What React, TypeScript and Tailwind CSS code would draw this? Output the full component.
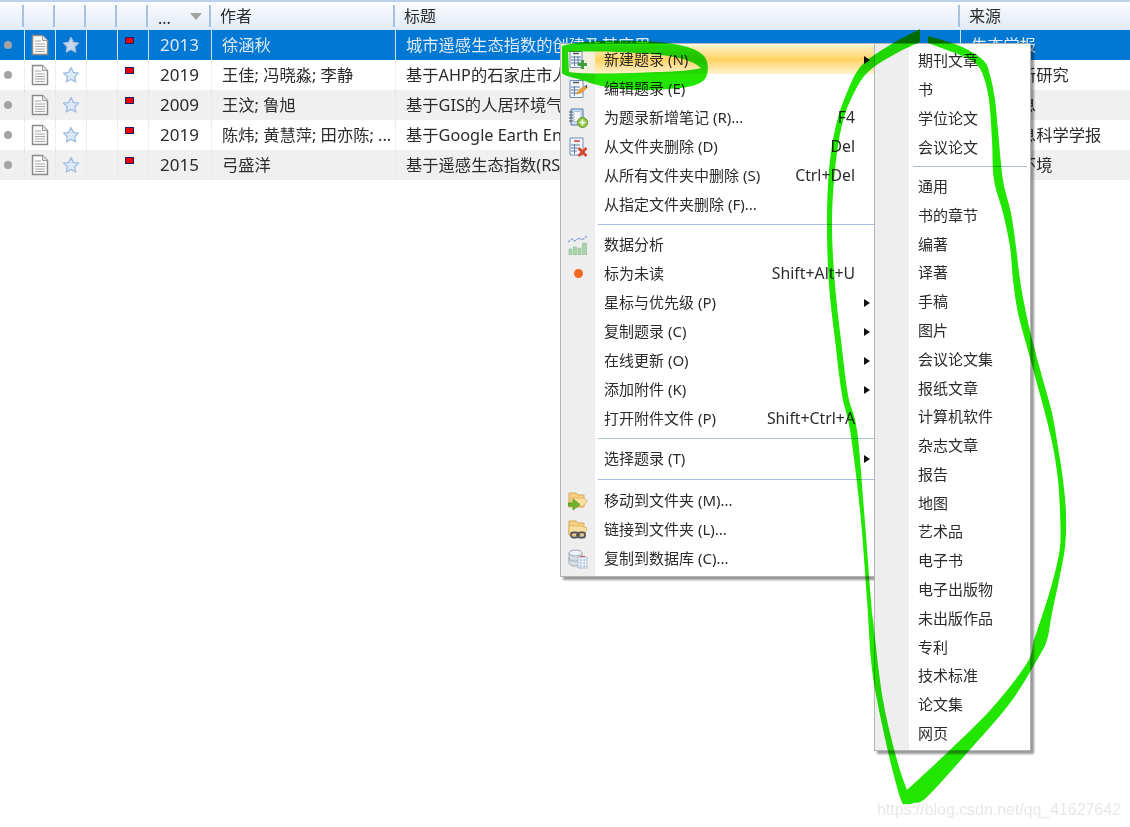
import React from "react";

const columns = "grid grid-cols-[25px_31px_31px_31px_31px_63px_184px_565px_169px]";

const rows = [
    { year: "2013", author: "徐涵秋", title: "城市遥感生态指数的创建及其应用", source: "生态学报" },
    { year: "2019", author: "王佳; 冯晓淼; 李静", title: "基于AHP的石家庄市人居环境适宜性评价", source: "科技创新研究" },
    { year: "2009", author: "王汶; 鲁旭", title: "基于GIS的人居环境气候适宜性评价", source: "科技信息" },
    { year: "2019", author: "陈炜; 黄慧萍; 田亦陈; ...", title: "基于Google Earth Engine平台的生态环境变化监测", source: "地球信息科学学报" },
    { year: "2015", author: "弓盛洋", title: "基于遥感生态指数(RSEI)的生态环境质量评价", source: "资源与环境" },
];

function DocIcon() {
    return (
        <svg width="20" height="22" viewBox="0 0 20 22">
            <path d="M2.500 1.500h10l5 5v14h-15z" fill="#fbfbfb" stroke="#8a8a8a" strokeWidth="1.500" />
            <path d="M12.500 1.500v5h5" fill="#e2e2e2" stroke="#9a9a9a" />
            <path d="M5 7h6M5 10h10M5 12.500h10M5 15h10M5 17.500h10" stroke="#a8a8a8" strokeWidth="1.200" />
        </svg>
    );
}

function StarIcon({ filled }: { filled?: boolean }) {
    return (
        <svg width="18" height="18" viewBox="0 0 18 18">
            <path
                d="M9 1.500l2.300 4.900 5.200.7-3.800 3.600 1 5.300L9 13.400 4.300 16l1-5.300L1.500 7.100l5.200-.7z"
                fill={filled ? "#c9d9ee" : "#dde8f7"}
                stroke={filled ? "#a9c2e2" : "#9fbde3"}
                strokeWidth="1.300"
                strokeLinejoin="round"
            />
        </svg>
    );
}

function TableRow({ row, index }: { row: (typeof rows)[number]; index: number }) {
    const selected = index === 0;
    const bg = selected ? "bg-[#0078d4] text-[#dfeaf6]" : index % 2 === 0 ? "bg-[#f0f0f0] text-[#2b2b2b]" : "bg-white text-[#2b2b2b]";
    const cell = selected
        ? "h-[30px] border-r border-[#cfe2f5] flex items-center overflow-hidden whitespace-nowrap"
        : "h-[30px] border-r border-dotted border-[#e2e2e2] flex items-center overflow-hidden whitespace-nowrap";

    return (
        <div className={`${columns} ${bg} text-[16.300px]`}>
            <div className={`${cell} justify-center pr-[9px]`}>
                <span className="w-[8px] h-[8px] rounded-full bg-[#a3a3a3]" />
            </div>
            <div className={`${cell} justify-center`}>
                <DocIcon />
            </div>
            <div className={`${cell} justify-center`}>
                <StarIcon filled={selected} />
            </div>
            <div className={cell} />
            <div className={`${cell} items-start pl-[7px] pt-[7px]`}>
                <span className="w-[9px] h-[7px] bg-[#f00000] border border-[#1c1c6e]" />
            </div>
            <div className={`${cell} pl-[11px] text-[17px]`}>{row.year}</div>
            <div className={`${cell} pl-[10px]`}>{row.author}</div>
            <div className={`${cell} pl-[10px]`}>{row.title}</div>
            <div className="h-[30px] flex items-center overflow-hidden whitespace-nowrap pl-[10px]">{row.source}</div>
        </div>
    );
}

function HeaderCell({ children, className = "" }: { children?: React.ReactNode; className?: string }) {
    return (
        <div className={`relative h-[28px] flex items-center text-[16px] text-[#2b2b2b] ${className}`}>
            {children}
            <span className="absolute right-[1px] top-[3px] h-[22px] w-[2px] bg-[#a9c1de]" />
        </div>
    );
}

function NewRefIcon() {
    return (
        <svg width="20" height="20" viewBox="0 0 20 20">
            <path d="M2 1.500h12v16H2z" fill="#f4f7fb" stroke="#6f8fb5" />
            <path d="M5 3.500h6" stroke="#555" strokeWidth="1.500" />
            <path d="M3 7h10M3 10h10M3 13h10M6.500 6v10M10 6v10" stroke="#5f7fa8" />
            <path d="M14.500 10v9M10 14.500h9" stroke="#3f9f3f" strokeWidth="3" />
        </svg>
    );
}

function EditRefIcon() {
    return (
        <svg width="20" height="20" viewBox="0 0 20 20">
            <path d="M2 1.500h13v17H2z" fill="#f4f7fb" stroke="#6f8fb5" />
            <path d="M5 3.500h6" stroke="#555" strokeWidth="1.500" />
            <path d="M3 8h9M3 11h7M3 14h7M6.500 7v10" stroke="#5f7fa8" />
            <path d="M9 15l2-4 6-4 2 2-6 5z" fill="#eda33b" stroke="#c67f1d" strokeWidth=".6" />
            <path d="M17 7l1.500-1 1 2-1 1z" fill="#444" />
        </svg>
    );
}

function NoteIcon() {
    return (
        <svg width="20" height="20" viewBox="0 0 20 20">
            <path d="M3 1h12v16H3z" fill="#cfe0f2" stroke="#4d7bab" />
            <path d="M6 3.500h7v10H6z" fill="#f7f7f7" stroke="#9db4cf" strokeWidth=".7" />
            <path d="M1 4h4M1 7h4M1 10h4M1 13h4" stroke="#555" />
            <circle cx="14.500" cy="14.500" r="5" fill="#8fc744" stroke="#5f9a24" />
            <path d="M14.500 11.500v6M11.500 14.500h6" stroke="#fff" strokeWidth="1.600" />
        </svg>
    );
}

function DeleteRefIcon() {
    return (
        <svg width="20" height="20" viewBox="0 0 20 20">
            <path d="M2 1h13v17H2z" fill="#f4f7fb" stroke="#6f8fb5" />
            <path d="M6 4h6" stroke="#d03a3a" strokeWidth="1.500" />
            <path d="M3 8h9M3 11h7M3 14h6M6.500 7v10" stroke="#5f7fa8" />
            <path d="M10.500 11l8 8M18.500 11l-8 8" stroke="#d5472f" strokeWidth="2.800" />
        </svg>
    );
}

function ChartIcon() {
    return (
        <svg width="20" height="20" viewBox="0 0 20 20">
            <path d="M0 7l4-3 3 2 4-3 3 2 5-4" fill="none" stroke="#7f9bd0" strokeWidth="1.200" strokeDasharray="2.500 1" />
            <path d="M1 14h3v6H1zM5.500 12h3v8h-3zM10 13h3v7h-3zM14.500 8h4v12h-4z" fill="#a9d3ad" stroke="#8dbf92" strokeWidth=".6" />
        </svg>
    );
}

function MoveFolderIcon() {
    return (
        <svg width="20" height="20" viewBox="0 0 20 20">
            <path d="M1 2h7l2 2h6v12H1z" fill="#f5cf83" stroke="#d9a850" />
            <path d="M3 7h13l3 3-3 5H3z" fill="#fbdf9f" stroke="#dcae5b" strokeWidth=".8" />
            <path d="M0 12h5V8l7 5.500-7 5.500v-4H0z" fill="#6fb52c" stroke="#4f8f1c" strokeWidth=".7" />
        </svg>
    );
}

function LinkFolderIcon() {
    return (
        <svg width="20" height="20" viewBox="0 0 20 20">
            <path d="M1 1h7l2 2h6v12H1z" fill="#f5cf83" stroke="#d9a850" />
            <path d="M1 6h13l5 2-2 7H1z" fill="#fbdf9f" stroke="#dcae5b" strokeWidth=".8" />
            <rect x="3" y="12.500" width="7" height="5" rx="2" fill="none" stroke="#555" strokeWidth="1.800" />
            <rect x="10" y="12.500" width="7" height="5" rx="2" fill="none" stroke="#555" strokeWidth="1.800" />
            <path d="M8 15h4" stroke="#555" strokeWidth="1.800" />
        </svg>
    );
}

function DatabaseIcon() {
    return (
        <svg width="20" height="20" viewBox="0 0 20 20">
            <path d="M1 4v10c0 2 3 3 6.500 3s6.500-1 6.500-3V4z" fill="#d7dde6" stroke="#a1a9b5" />
            <ellipse cx="7.500" cy="4" rx="6.500" ry="3" fill="#eef1f5" stroke="#a1a9b5" />
            <path d="M1 9c0 2 3 3 6.500 3S14 11 14 9" fill="none" stroke="#a1a9b5" />
            <path d="M10 8h9v11h-9z" fill="#eaf0f8" stroke="#a9bcd6" />
            <path d="M12 7.500h5" stroke="#d66" strokeWidth="1.200" />
            <path d="M12 11h1.500M15.500 11H17M12 14h1.500M15.500 14H17M12 17h1.500M15.500 17H17" stroke="#6f8fb5" strokeWidth="1.200" />
        </svg>
    );
}

function UnreadIcon() {
    return <span className="block w-[9px] h-[9px] rounded-full bg-[#f3691f]" />;
}

function Arrow() {
    return <span className="block border-y-[4.500px] border-y-transparent border-l-[6px] border-l-[#111]" />;
}

function MenuRow({
    label,
    icon,
    shortcut,
    submenu,
    active,
}: {
    label: string;
    icon?: React.ReactNode;
    shortcut?: string;
    submenu?: boolean;
    active?: boolean;
}) {
    return (
        <div className={`flex h-[29px] items-center ${active ? "bg-gradient-to-b from-[#fff3c8] via-[#ffd35f] to-[#fff2cc]" : ""}`}>
            <div className={`flex h-full w-[34px] shrink-0 items-center justify-center ${active ? "bg-[#f5efdb]" : "bg-[#eeeeee]"}`}>{icon}</div>
            <div className="flex-1 pl-[9px] whitespace-nowrap">{label}</div>
            {shortcut && <div className="whitespace-nowrap text-[15.800px]">{shortcut}</div>}
            <div className="flex w-[19px] shrink-0 justify-end pr-[4px]">{submenu && <Arrow />}</div>
        </div>
    );
}

function MenuSeparator({ className }: { className: string }) {
    return (
        <div className={`flex items-center ${className}`}>
            <div className="ml-[37px] h-[1.500px] flex-1 bg-[#a9bedb]" />
        </div>
    );
}

function ContextMenu() {
    return (
        <div className="absolute left-[560px] top-[43px] w-[315px] border border-[#b4b4b4] bg-white pt-[1px] pb-[3px] text-[15px] text-[#2b2b2b] shadow-[3px_3px_2px_rgba(0,0,0,0.4)] [background-image:linear-gradient(90deg,#eeeeee_34px,#ffffff_34px)]">
            <MenuRow label="新建题录 (N)" icon={<NewRefIcon />} submenu active />
            <MenuRow label="编辑题录 (E)" icon={<EditRefIcon />} />
            <MenuRow label="为题录新增笔记 (R)..." icon={<NoteIcon />} shortcut="F4" />
            <MenuRow label="从文件夹删除 (D)" icon={<DeleteRefIcon />} shortcut="Del" />
            <MenuRow label="从所有文件夹中删除 (S)" shortcut="Ctrl+Del" />
            <MenuRow label="从指定文件夹删除 (F)..." />
            <MenuSeparator className="h-[11px]" />
            <MenuRow label="数据分析" icon={<ChartIcon />} />
            <MenuRow label="标为未读" icon={<UnreadIcon />} shortcut="Shift+Alt+U" />
            <MenuRow label="星标与优先级 (P)" submenu />
            <MenuRow label="复制题录 (C)" submenu />
            <MenuRow label="在线更新 (O)" submenu />
            <MenuRow label="添加附件 (K)" submenu />
            <MenuRow label="打开附件文件 (P)" shortcut="Shift+Ctrl+A" />
            <MenuSeparator className="h-[11px]" />
            <MenuRow label="选择题录 (T)" submenu />
            <MenuSeparator className="h-[13px]" />
            <MenuRow label="移动到文件夹 (M)..." icon={<MoveFolderIcon />} />
            <MenuRow label="链接到文件夹 (L)..." icon={<LinkFolderIcon />} />
            <MenuRow label="复制到数据库 (C)..." icon={<DatabaseIcon />} />
        </div>
    );
}

const typesTop = ["期刊文章", "书", "学位论文", "会议论文"];
const typesRest = ["通用", "书的章节", "编著", "译著", "手稿", "图片", "会议论文集", "报纸文章", "计算机软件", "杂志文章", "报告", "地图", "艺术品", "电子书", "电子出版物", "未出版作品", "专利", "技术标准", "论文集", "网页"];

function TypeRow({ label }: { label: string }) {
    return <div className="flex h-[28.800px] items-center pl-[43px]">{label}</div>;
}

function TypeMenu() {
    return (
        <div className="absolute left-[874px] top-[43px] h-[708px] w-[157px] border border-[#b4b4b4] pt-[2px] text-[15px] text-[#2b2b2b] shadow-[3px_3px_2px_rgba(0,0,0,0.4)] [background-image:linear-gradient(90deg,#eeeeee_34px,#ffffff_34px)]">
            {typesTop.map((t) => (
                <TypeRow key={t} label={t} />
            ))}
            <div className="flex h-[10.600px] items-center pl-[38px] pr-[3px]">
                <div className="h-[1.500px] flex-1 bg-[#a9bedb]" />
            </div>
            {typesRest.map((t) => (
                <TypeRow key={t} label={t} />
            ))}
        </div>
    );
}

type Pt = [number, number];

// catmull-rom through the traced points, returned as C segments
function smooth(p: Pt[]) {
    let d = "";
    for (let i = 0; i < p.length - 1; i++) {
        const a = p[Math.max(i - 1, 0)];
        const b = p[i];
        const c = p[i + 1];
        const e = p[Math.min(i + 2, p.length - 1)];
        d += `C${b[0] + (c[0] - a[0]) / 6} ${b[1] + (c[1] - a[1]) / 6} ${c[0] - (e[0] - b[0]) / 6} ${c[1] - (e[1] - b[1]) / 6} ${c[0]} ${c[1]}`;
    }
    return d;
}

const outerEdge: Pt[] = [
    [920, 29], [890, 45], [862, 65], [848, 90], [836, 125], [829, 170], [827, 225], [829, 285], [835, 340], [842, 395], [850, 430], [860, 510], [867, 600],
    [871, 660], [877, 700], [890, 760], [901, 800], [906, 804], [914, 803], [927, 797], [967, 753], [1010, 703], [1037, 660], [1047, 640], [1052, 613],
    [1059, 580], [1065, 547], [1066, 513], [1063, 480], [1058, 447], [1052, 413], [1043, 380], [1034, 347], [1026, 313], [1020, 280], [1016, 247], [1011, 213],
    [1003, 180], [998, 130], [995, 100], [990, 75], [983, 60], [960, 46], [928, 36],
];
const innerRight: Pt[] = [
    [928, 43], [960, 55], [975, 63], [983, 75], [989, 100], [992, 140], [994, 180], [1003, 213], [1010, 247], [1013, 280], [1018, 313], [1027, 347], [1036, 380],
    [1045, 413], [1053, 447], [1058, 480], [1060, 513], [1060, 547], [1053, 580], [1043, 613], [1034, 640], [1027, 663], [993, 707], [950, 750], [907, 790],
];
const innerLeft: Pt[] = [
    [907, 790], [897, 760], [883, 700], [873, 620], [871, 600], [864, 510], [857, 430], [848, 395], [841, 340], [835, 285], [832, 225], [835, 170], [842, 125],
    [853, 95], [868, 72], [895, 54], [920, 42],
];
const bigStroke = `M920 29${smooth(outerEdge)}L928 43${smooth(innerRight)}${smooth(innerLeft)}Z`;

// marker strokes, multiplied so the text and row colours show through
function MarkerStrokes() {
    return (
        <svg className="pointer-events-none absolute left-0 top-0 mix-blend-multiply" width="1130" height="827" viewBox="0 0 1130 827">
            <path
                fill="#22e600"
                fillRule="evenodd"
                d="M562 46C575 41 610 40 640 41C670 42 695 46 704 56C709 62 709 73 705 79C698 87 680 89 650 90C625 91 600 87 585 81C572 77 564 76 562 73Z
                   M568 52L569 72C590 75 640 73 680 71C690 70 697 69 701 68C695 62 680 56 650 54C625 52 590 51 568 52Z"
            />
            <path fill="#22e600" d={bigStroke} />
        </svg>
    );
}

export default function App() {
    return (
        <div className="relative h-[827px] w-[1130px] overflow-hidden bg-white font-['Noto_Sans','Noto_Sans_CJK_SC',sans-serif]">
            {/* Column header */}
            <div className="h-[2px] bg-[#bcd2ee]" />
            <div className={`${columns} bg-gradient-to-b from-[#fbfcfe] to-[#e0eaf7]`}>
                <HeaderCell />
                <HeaderCell />
                <HeaderCell />
                <HeaderCell />
                <HeaderCell />
                <HeaderCell className="pl-[9px]">
                    <span className="pt-[4px]">...</span>
                    <span className="absolute left-[41px] top-[11px] border-x-[6px] border-t-[7px] border-x-transparent border-t-[#a3a3a3]" />
                </HeaderCell>
                <HeaderCell className="pl-[8px]">作者</HeaderCell>
                <HeaderCell className="pl-[8px]">标题</HeaderCell>
                <div className="flex h-[28px] items-center pl-[8px] text-[16px] text-[#2b2b2b]">来源</div>
            </div>

            {rows.map((row, i) => (
                <TableRow key={i} row={row} index={i} />
            ))}

            <ContextMenu />
            <TypeMenu />
            <MarkerStrokes />

            <div className="absolute left-[877px] top-[798px] whitespace-nowrap font-['Liberation_Sans',sans-serif] text-[15.900px] text-[#e8e8e8]">
                https://blog.csdn.net/qq_41627642
            </div>
        </div>
    );
}
